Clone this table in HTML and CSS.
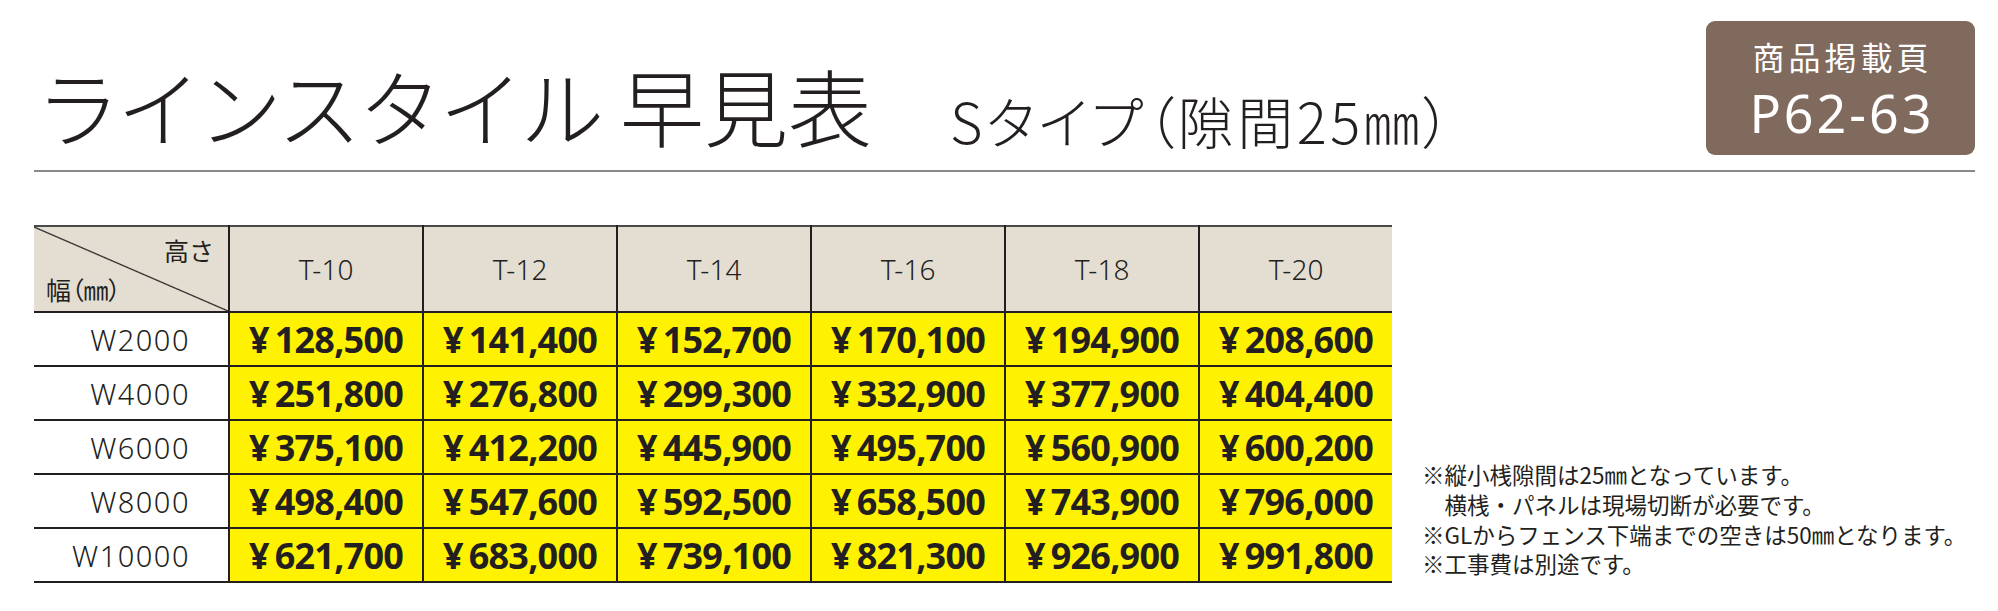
FILE: index.html
```html
<!DOCTYPE html>
<html lang="ja">
<head>
<meta charset="utf-8">
<title>ラインスタイル 早見表</title>
<link rel="stylesheet" href="styles.css">
</head>
<body>
<div class="page">
  <header class="head">
    <h1 class="title"><span class="title-kana">ラインスタイル</span> 早見表</h1>
    <p class="sub">Sタイプ（隙間25㎜）</p>
    <div class="badge">
      <div class="badge-label">商品掲載頁</div>
      <div class="badge-page">P62-63</div>
    </div>
  </header>
  <main class="body">
    <table class="chart">
      <colgroup>
        <col class="c-label"><col class="c-val"><col class="c-val"><col class="c-val"><col class="c-val"><col class="c-val"><col class="c-last">
      </colgroup>
      <thead>
        <tr>
          <th class="corner"><div class="corner-in"><span class="corner-h">高さ</span><span class="corner-w">幅（㎜）</span></div></th>
          <th class="col">T-10</th>
          <th class="col">T-12</th>
          <th class="col">T-14</th>
          <th class="col">T-16</th>
          <th class="col">T-18</th>
          <th class="col">T-20</th>
        </tr>
      </thead>
      <tbody>
        <tr>
          <td class="label">W2000</td>
          <td class="price"><span class="yen">¥</span>128,500</td>
          <td class="price"><span class="yen">¥</span>141,400</td>
          <td class="price"><span class="yen">¥</span>152,700</td>
          <td class="price"><span class="yen">¥</span>170,100</td>
          <td class="price"><span class="yen">¥</span>194,900</td>
          <td class="price"><span class="yen">¥</span>208,600</td>
        </tr>
        <tr>
          <td class="label">W4000</td>
          <td class="price"><span class="yen">¥</span>251,800</td>
          <td class="price"><span class="yen">¥</span>276,800</td>
          <td class="price"><span class="yen">¥</span>299,300</td>
          <td class="price"><span class="yen">¥</span>332,900</td>
          <td class="price"><span class="yen">¥</span>377,900</td>
          <td class="price"><span class="yen">¥</span>404,400</td>
        </tr>
        <tr>
          <td class="label">W6000</td>
          <td class="price"><span class="yen">¥</span>375,100</td>
          <td class="price"><span class="yen">¥</span>412,200</td>
          <td class="price"><span class="yen">¥</span>445,900</td>
          <td class="price"><span class="yen">¥</span>495,700</td>
          <td class="price"><span class="yen">¥</span>560,900</td>
          <td class="price"><span class="yen">¥</span>600,200</td>
        </tr>
        <tr>
          <td class="label">W8000</td>
          <td class="price"><span class="yen">¥</span>498,400</td>
          <td class="price"><span class="yen">¥</span>547,600</td>
          <td class="price"><span class="yen">¥</span>592,500</td>
          <td class="price"><span class="yen">¥</span>658,500</td>
          <td class="price"><span class="yen">¥</span>743,900</td>
          <td class="price"><span class="yen">¥</span>796,000</td>
        </tr>
        <tr>
          <td class="label">W10000</td>
          <td class="price"><span class="yen">¥</span>621,700</td>
          <td class="price"><span class="yen">¥</span>683,000</td>
          <td class="price"><span class="yen">¥</span>739,100</td>
          <td class="price"><span class="yen">¥</span>821,300</td>
          <td class="price"><span class="yen">¥</span>926,900</td>
          <td class="price"><span class="yen">¥</span>991,800</td>
        </tr>
      </tbody>
    </table>
    <div class="notes">
      <p>※縦小桟隙間は25㎜となっています。</p>
      <p class="indent">横桟・パネルは現場切断が必要です。</p>
      <p>※GLからフェンス下端までの空きは50㎜となります。</p>
      <p>※工事費は別途です。</p>
    </div>
  </main>
</div>
</body>
</html>
```

FILE: styles.css
```css
* {
  box-sizing: border-box;
  margin: 0;
  padding: 0;
}

body {
  margin: 0;
  width: 1998px;
  height: 611px;
  overflow: hidden;
  background: #ffffff;
  color: #231f20;
  font-family: "Noto Sans CJK JP", "Noto Sans", sans-serif;
}

.page {
  padding: 0 23px 0 34px;
}

/* ---------- header ---------- */
.head {
  display: flex;
  align-items: flex-end;
  height: 172px;
  padding-top: 21px;
  border-bottom: 2px solid #8a8a8a;
}

.title {
  font-size: 84px;
  font-weight: 300;
  line-height: 1;
  white-space: nowrap;
  margin-left: 2px;
  margin-bottom: 23px;
}

.title-kana {
  letter-spacing: -3px;
}

.sub {
  font-size: 56px;
  font-weight: 300;
  line-height: 1;
  white-space: nowrap;
  font-feature-settings: "palt";
  letter-spacing: 3.5px;
  margin-left: 78px;
  margin-bottom: 22px;
}

.badge {
  margin-left: auto;
  margin-bottom: 15px;
  width: 269px;
  height: 134px;
  padding-top: 19px;
  background: #806a5e;
  border-radius: 9px;
  color: #ffffff;
  text-align: center;
}

.badge-label {
  font-size: 32px;
  line-height: 1;
  letter-spacing: 4px;
  padding-left: 4px;
}

.badge-page {
  margin-top: 15px;
  font-family: "Noto Sans", sans-serif;
  font-size: 52px;
  line-height: 1;
  letter-spacing: 3px;
  padding-left: 3px;
}

/* ---------- body ---------- */
.body {
  display: flex;
  align-items: flex-end;
  margin-top: 53px;
}

.chart {
  border-collapse: collapse;
  table-layout: fixed;
  width: 1358px;
  border-top: 2px solid #4a4a4a;
}

.c-label { width: 195px; }
.c-val { width: 194px; }
.c-last { width: 193px; }

.chart thead th {
  height: 86px;
  background-color: #e3ded1;
  font-weight: 300;
}

.chart thead th.corner {
  padding: 0;
  background-image: linear-gradient(to top right, transparent calc(50% - 1.2px), #231f20 50%, transparent calc(50% + 1.2px));
}

.corner-in {
  height: 84px;
  display: flex;
  flex-direction: column;
  justify-content: space-between;
  padding: 8px 14px 7px 12px;
  font-size: 25px;
  line-height: 30px;
  font-weight: 400;
}

.corner-h {
  align-self: flex-end;
}

.corner-w {
  align-self: flex-start;
  font-feature-settings: "palt";
}

.col {
  border-left: 2px solid #231f20;
  font-family: "Noto Sans", sans-serif;
  font-size: 28px;
  text-align: center;
}

.chart tbody tr {
  height: 54px;
}

.chart tbody td {
  border-top: 2px solid #231f20;
}

.chart tbody tr:last-child td {
  border-bottom: 2px solid #231f20;
}

.label {
  text-align: right;
  padding-right: 38px;
  font-family: "Noto Sans", sans-serif;
  font-weight: 300;
  font-size: 29px;
  letter-spacing: 1.5px;
}

.price {
  background: #fff200;
  border-left: 2px solid #231f20;
  text-align: center;
  font-family: "Noto Sans", sans-serif;
  font-weight: 700;
  font-size: 36px;
  letter-spacing: -0.8px;
  white-space: nowrap;
}

.yen {
  margin-right: 6px;
}

/* ---------- notes ---------- */
.notes {
  margin-left: 30px;
  margin-bottom: 4px;
  font-size: 22.5px;
  line-height: 29.7px;
  white-space: nowrap;
}

.indent {
  padding-left: 1em;
}
```
